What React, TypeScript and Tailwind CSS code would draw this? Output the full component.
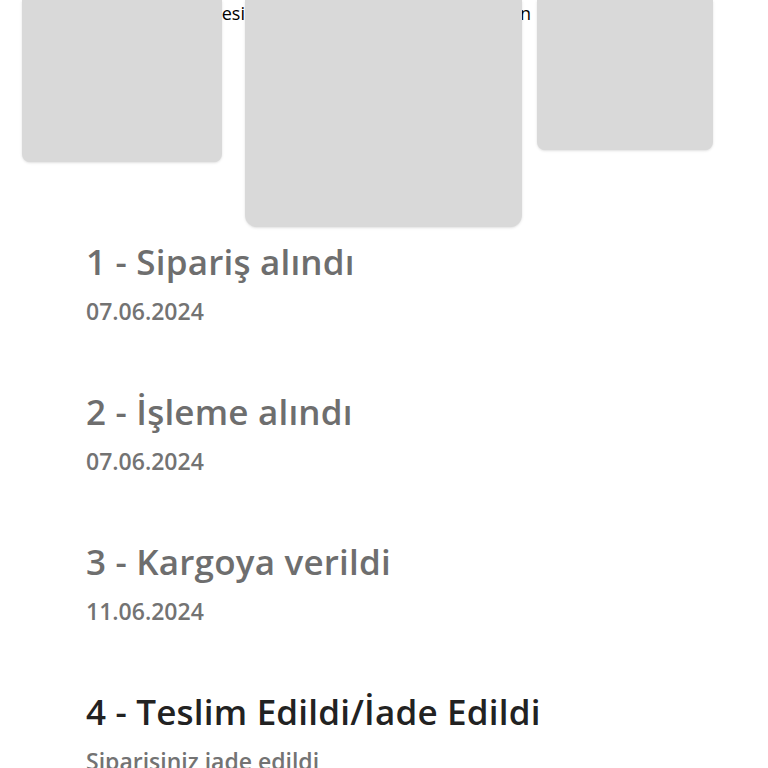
export default function App() {
  const steps = [
    { title: '1 - Sipariş alındı', sub: '07.06.2024', active: false },
    { title: '2 - İşleme alındı', sub: '07.06.2024', active: false },
    { title: '3 - Kargoya verildi', sub: '11.06.2024', active: false },
    { title: '4 - Teslim Edildi/İade Edildi', sub: 'Siparisiniz iade edildi', active: true },
  ];

  return (
    <div className="w-[768px] h-[768px] overflow-hidden bg-white font-['Open_Sans',sans-serif]">
      {/* Image carousel */}
      <div className="relative h-[228px]">
        <div className="absolute left-0 top-0 flex pt-[1px] text-[18px] leading-[24px] text-black">
          <span className="w-[245px] text-right">Ürün Önizlemesi</span>
          <span className="w-[286px] text-right">ürün görselleri için</span>
        </div>
        <div className="relative flex items-start pl-[22px]">
          <div className="w-[200px] h-[162px] bg-[#d9d9d9] rounded-b-lg shadow-sm" />
          <div className="ml-[23px] w-[277px] h-[227px] bg-[#d9d9d9] rounded-b-xl shadow-sm" />
          <div className="ml-[15px] w-[176px] h-[150px] bg-[#d9d9d9] rounded-b-lg shadow-sm" />
        </div>
      </div>

      {/* Order steps */}
      <div className="flex flex-col pl-[86px] pt-[12px]">
        {steps.map((s, i) => (
          <div key={i} className="h-[150px]">
            <h2
              className={`text-[35px] leading-[44px] font-semibold tracking-[0.2px] ${
                s.active ? 'text-[#222222]' : 'text-[#6e6e6e]'
              }`}
            >
              {s.title}
            </h2>
            <p className="mt-[12px] text-[23px] leading-[30px] font-semibold text-[#737373]">{s.sub}</p>
          </div>
        ))}
      </div>
    </div>
  );
}
